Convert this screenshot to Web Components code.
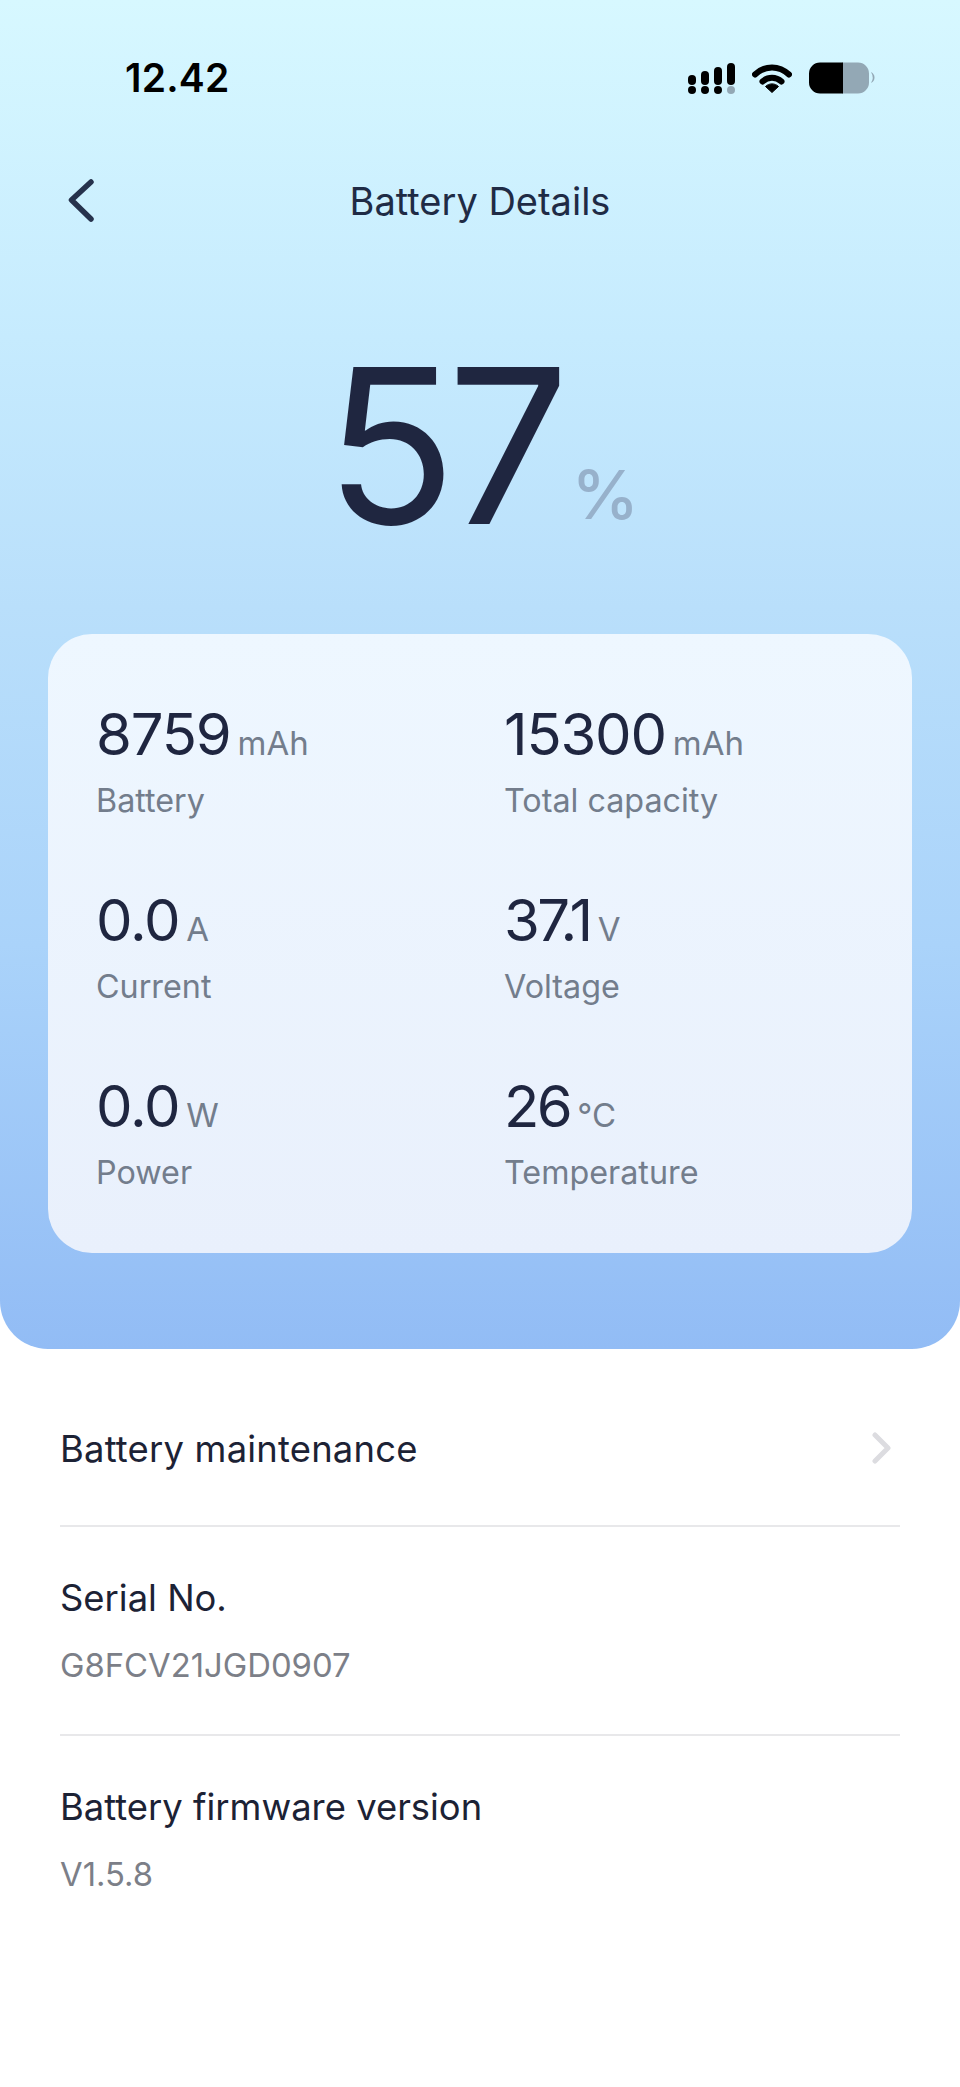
<!DOCTYPE html>
<html lang="en"><head><meta charset="utf-8"><title>Battery Details</title>
<style>html,body{margin:0;padding:0;background:#fff}body{font-family:Inter,"Liberation Sans",sans-serif;width:960px;min-height:2087px}</style>
</head><body>
<battery-screen>
  <hero-panel>
    <status-bar time="12.42"></status-bar>
    <nav-bar title="Battery Details"></nav-bar>
    <charge-level value="57" unit="%"></charge-level>
    <stat-card>
      <stat-item value="8759" unit="mAh" label="Battery"></stat-item>
      <stat-item value="15300" unit="mAh" label="Total capacity"></stat-item>
      <stat-item value="0.0" unit="A" label="Current"></stat-item>
      <stat-item value="37.1" unit="V" label="Voltage" tight></stat-item>
      <stat-item value="0.0" unit="W" label="Power"></stat-item>
      <stat-item value="26" unit="°C" label="Temperature" tight></stat-item>
    </stat-card>
  </hero-panel>
  <info-list>
    <info-row title="Battery maintenance" chevron></info-row>
    <info-row title="Serial No." detail="G8FCV21JGD0907"></info-row>
    <info-row title="Battery firmware version" detail="V1.5.8" last></info-row>
  </info-list>
</battery-screen>
<script>
function def(name, css, html){
  customElements.define(name, class extends HTMLElement{
    connectedCallback(){
      if(this.shadowRoot) return;
      const a=n=>this.getAttribute(n)||'';
      const r=this.attachShadow({mode:'open'});
      r.innerHTML='<style>'+css+'</style>'+html(a,this);
    }
  });
}
def('battery-screen',':host{display:block;width:960px;height:2087px;background:#fff;overflow:hidden}',()=>'<slot></slot>');
def('hero-panel',':host{display:block;height:1349px;box-sizing:border-box;padding-top:56px;border-radius:0 0 48px 48px;background:linear-gradient(180deg,#d7f8ff 0%,#c6ebfe 25%,#b9dffb 45%,#aad3fa 70%,#92bcf5 100%)}',()=>'<slot></slot>');
def('status-bar',':host{display:flex;align-items:center;height:44px;padding-left:125px;padding-right:84px;color:#000}.t{font-size:39px;font-weight:600;line-height:44px;letter-spacing:.2px;flex:1}.i{display:flex;align-items:center;gap:16px}svg{display:block}',a=>`<span class="t">${a('time')}</span><span class="i">
<svg width="48" height="32" viewBox="0 0 48 32"><g fill="#000"><rect x="0" y="13" width="8" height="10" rx="4"/><rect x="13" y="9" width="8" height="14" rx="4"/><rect x="26" y="5" width="8" height="18" rx="4"/><rect x="39" y="1" width="8" height="22" rx="4"/><circle cx="4" cy="28" r="4"/><circle cx="17" cy="28" r="4"/><circle cx="30" cy="28" r="4"/></g><circle cx="43" cy="28" r="4" fill="#93a8b5"/></svg>
<svg width="40" height="30" viewBox="0 0 40 30"><path d="M3 11.500C13 2 27 2 37 11.500" fill="none" stroke="#000" stroke-width="6" stroke-linecap="round"/><path d="M10.500 18.500C16 13.500 24 13.500 29.500 18.500" fill="none" stroke="#000" stroke-width="6" stroke-linecap="round"/><path d="M13.500 23.500C17 20 23 20 26.500 23.500L20 29.500Z" fill="#000" stroke="#000" stroke-linejoin="round"/></svg>
<svg width="68" height="32" viewBox="0 0 68 32"><path d="M34 0.500H50A11 11 0 0 1 61 11.500V20.500A11 11 0 0 1 50 31.500H34Z" fill="#93a8b5"/><path d="M12 0.500H35V31.500H12A11 11 0 0 1 1 20.500V11.500A11 11 0 0 1 12 0.500Z" fill="#000"/><path d="M63 10Q66.500 16 63 21Q66.500 19 66.500 15.500Q66.500 12 63 10Z" fill="#93a8b5"/></svg></span>`);
def('nav-bar',':host{display:flex;align-items:center;justify-content:center;position:relative;margin-top:79px;height:44px;color:#1f2b45;font-size:38px;font-weight:400;line-height:44px}svg{position:absolute;left:64px;top:-1px}',a=>`<svg width="32" height="44" viewBox="0 0 32 44"><path d="M27 4 L7.500 22 L27 41" fill="none" stroke="#26324c" stroke-width="5.500" stroke-linecap="round" stroke-linejoin="round"/></svg><span>${a('title')}</span>`);
def('charge-level',':host{display:block;text-align:center;margin-top:70px;height:341px;color:#1f2640;padding-left:4px}.v{font-size:216px;font-weight:400;line-height:305px;letter-spacing:-9px}.u{font-size:68px;font-weight:500;color:#97b1cb;margin-left:11px;line-height:1;vertical-align:5px}',a=>`<span class="v">${a('value')}</span><span class="u">${a('unit')}</span>`);
def('stat-card',':host{display:grid;grid-template-columns:408px 1fr;grid-auto-rows:186px;box-sizing:border-box;margin:0 48px;height:619px;padding:69px 0 0 48px;border-radius:44px;background:linear-gradient(180deg,#eef7ff 0%,#e9f0fc 100%)}',()=>'<slot></slot>');
def('stat-item',':host{display:block}.r{display:flex;align-items:baseline;gap:7px;height:62px;line-height:62px;color:#1f2640;font-size:58px;letter-spacing:-1.200px}:host([tight]) .r .v{letter-spacing:-2.500px}.u{font-size:33px;color:#737d8c;letter-spacing:0}.l{font-size:32.300px;line-height:44px;margin-top:14px;color:#737d8c}',a=>`<div class="r"><span class="v">${a('value')}</span><span class="u">${a('unit')}</span></div><div class="l">${a('label')}</div>`);
def('info-list',':host{display:block;padding:0 60px}',()=>'<slot></slot>');
def('info-row',':host{display:flex;align-items:flex-start;justify-content:space-between;box-sizing:border-box;border-bottom:2px solid #e8e8ea;padding-top:47px;height:209px}:host([chevron]){height:178px;padding-top:76px}:host([chevron]) .t{letter-spacing:.2px}:host([last]){border-bottom:0}.t{font-size:36.400px;line-height:48px;color:#1c2235}.d{font-size:32.800px;line-height:44px;margin-top:21px;color:#7c7f88}svg{display:block;margin:7px 8px 0 0}',(a,el)=>`<div><div class="t">${a('title')}</div>${a('detail')?`<div class="d">${a('detail')}</div>`:''}</div>${el.hasAttribute('chevron')?'<svg width="20" height="32" viewBox="0 0 20 32"><path d="M3 3L16 16L3 29" fill="none" stroke="#dcdce0" stroke-width="5" stroke-linecap="round" stroke-linejoin="round"/></svg>':''}`);
</script>
</body></html>
